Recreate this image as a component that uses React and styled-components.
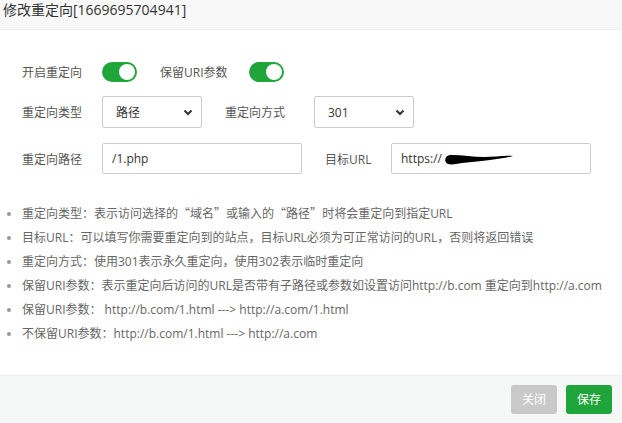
import { createGlobalStyle, styled } from 'styled-components';

const GlobalStyle = createGlobalStyle`
  html, body {
    margin: 0;
    padding: 0;
    background: #fff;
  }
  body {
    font-family: "Open Sans", "Noto Sans CJK SC", sans-serif;
    font-size: 12px;
    color: #555;
  }
`;

const tips = [
  '重定向类型：表示访问选择的“域名”或输入的“路径”时将会重定向到指定URL',
  '目标URL：可以填写你需要重定向到的站点，目标URL必须为可正常访问的URL，否则将返回错误',
  '重定向方式：使用301表示永久重定向，使用302表示临时重定向',
  '保留URI参数：表示重定向后访问的URL是否带有子路径或参数如设置访问http://b.com 重定向到http://a.com',
  '保留URI参数： http://b.com/1.html ---> http://a.com/1.html',
  '不保留URI参数：http://b.com/1.html ---> http://a.com',
];

// curly quotes should be full width like the rest of the CJK text
const withWideQuotes = (text) =>
  text.split(/([“”])/).map((part, i) =>
    part === '“' || part === '”' ? <Wide key={i}>{part}</Wide> : part
  );

const Chevron = () => (
  <svg width="10" height="7" viewBox="0 0 10 7">
    <path d="M1.5 1.5 L5 5 L8.5 1.5" fill="none" stroke="#333" strokeWidth="2" />
  </svg>
);

const Scribble = () => (
  <svg width="72" height="14" viewBox="0 0 72 14">
    <path
      d="M6 12 C1 10 3 2 10 3 C20 3 32 5 42 5 C52 5 62 3 71 4 C64 6 56 7 48 8 C40 9 30 10 20 11 C14 12 9 13 6 12 Z"
      fill="#000"
    />
  </svg>
);

export default function App() {
  return (
    <>
      <GlobalStyle />
      <Dialog>
        <Header>修改重定向[1669695704941]</Header>
        <Body>
          <Row $top={32}>
            <Label $w={80}>开启重定向</Label>
            <Switch $on />
            <Label $w={89} $gap>保留URI参数</Label>
            <Switch $on />
          </Row>
          <Row $top={14}>
            <Label $w={80}>重定向类型</Label>
            <Select>
              <span>路径</span>
              <Chevron />
            </Select>
            <Label $w={89} $gap>重定向方式</Label>
            <Select>
              <span>301</span>
              <Chevron />
            </Select>
          </Row>
          <Row $top={15}>
            <Label $w={80}>重定向路径</Label>
            <Input>/1.php</Input>
            <Label $w={66} $gap>目标URL</Label>
            <Input>
              https://
              <Scribble />
            </Input>
          </Row>
          <Tips>
            {tips.map((t) => (
              <li key={t}>{withWideQuotes(t)}</li>
            ))}
          </Tips>
        </Body>
        <Footer>
          <Button $variant="close">关闭</Button>
          <Button $variant="save">保存</Button>
        </Footer>
      </Dialog>
    </>
  );
}

const Dialog = styled.div`
  width: 622px;
  height: 423px;
  display: flex;
  flex-direction: column;
  overflow: hidden;
`;

const Header = styled.div`
  height: 30px;
  box-sizing: border-box;
  padding-left: 3px;
  line-height: 20px;
  font-size: 14px;
  color: #333;
  background: #f8f8f8;
  border-bottom: 1px solid #eee;
`;

const Body = styled.div`
  flex: 1;
  display: flex;
  flex-direction: column;
  padding-left: 22px;
`;

const Row = styled.div`
  display: flex;
  align-items: center;
  margin-top: ${({ $top }) => $top}px;
`;

const Label = styled.div`
  width: ${({ $w }) => $w}px;
  margin-left: ${({ $gap }) => ($gap ? 23 : 0)}px;
  color: #555;
  font-size: 12px;
  white-space: nowrap;
`;

const Switch = styled.div`
  position: relative;
  width: 35px;
  height: 20px;
  border-radius: 10px;
  background: ${({ $on }) => ($on ? '#20a53a' : '#ddd')};

  &::after {
    content: '';
    position: absolute;
    top: 2px;
    left: ${({ $on }) => ($on ? 17 : 2)}px;
    width: 16px;
    height: 16px;
    border-radius: 50%;
    background: #fff;
  }
`;

const Select = styled.div`
  width: 100px;
  height: 32px;
  box-sizing: border-box;
  display: flex;
  align-items: center;
  justify-content: space-between;
  padding: 0 8px 0 13px;
  border: 1px solid #ccc;
  border-radius: 2px;
  color: #333;
  font-size: 12px;
`;

const Input = styled.div`
  width: 200px;
  height: 31px;
  box-sizing: border-box;
  display: flex;
  align-items: center;
  padding-left: 9px;
  border: 1px solid #ccc;
  border-radius: 2px;
  color: #333;
  font-size: 12px;
`;

const Tips = styled.ul`
  margin: 27px 0 0;
  padding: 0;
  list-style: disc;
  color: #666;
  font-size: 12px;
  line-height: 24px;

  li::marker {
    color: #999;
  }
`;

const Wide = styled.span`
  font-family: "Noto Sans CJK SC", sans-serif;
`;

const Footer = styled.div`
  height: 48px;
  box-sizing: border-box;
  display: flex;
  align-items: center;
  justify-content: flex-end;
  gap: 9px;
  padding: 0 10px 1px;
  background: #f6f8f8;
  border-top: 1px solid #eee;
`;

const Button = styled.button`
  width: 46px;
  height: 29px;
  border: none;
  border-radius: 3px;
  font-family: inherit;
  font-size: 12px;
  color: #fff;
  background: ${({ $variant }) => ($variant === 'save' ? '#20a53a' : '#c9c9c9')};
`;
